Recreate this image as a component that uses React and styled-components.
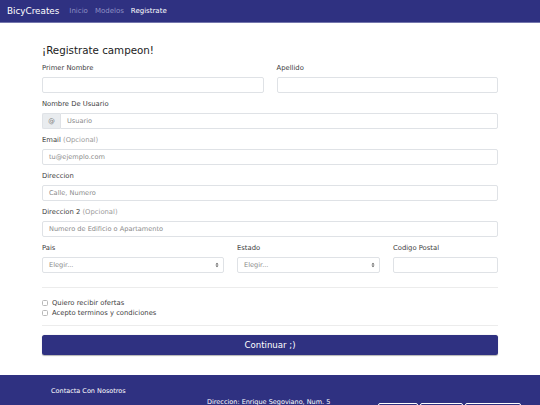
import React from "react";
import styled, { createGlobalStyle } from "styled-components";

const Global = createGlobalStyle`
  html, body { margin: 0; padding: 0; background: #fff; }
  body { font-family: "DejaVu Sans", "Open Sans", sans-serif; color: #3b3b3b; }
  * { box-sizing: border-box; }
`;

const BLUE = "#2f3181";

const Nav = styled.nav`
  height: 23px;
  background: ${BLUE};
  border-bottom: 1px solid #7476ad;
  display: flex;
  align-items: center;
  padding-left: 7px;
`;
const Brand = styled.span`
  color: #fff;
  font-size: 8.8px;
  margin-right: 10px;
`;
const NavLink = styled.span`
  color: ${(p) => (p.$active ? "#ffffff" : "#8e90c4")};
  font-size: 7px;
  margin-right: 7px;
`;

const Main = styled.main`
  padding: 21px 42px 0 42px;
`;
const Title = styled.h1`
  margin: 0 0 7px 0;
  font-size: 10.3px;
  line-height: 13px;
  font-weight: 400;
  color: #222;
`;
const Row = styled.div`
  display: grid;
  grid-template-columns: ${(p) => p.$cols || "1fr"};
  column-gap: 13px;
`;
const Group = styled.div`
  margin-bottom: 7px;
`;
const Label = styled.div`
  font-size: 6.8px;
  line-height: 9px;
  margin-bottom: 4px;
  color: #3d3d3d;
`;
const Muted = styled.span`
  color: #9a9a9a;
`;
const Input = styled.div`
  height: 16px;
  border: 1px solid #dfe2e6;
  border-radius: 2px;
  display: flex;
  align-items: center;
  padding-left: 6px;
  font-size: 6.6px;
  color: #8a8a8a;
  background: #fff;
`;
const InputGroup = styled.div`
  display: flex;
  height: 16px;
`;
const Prepend = styled.div`
  width: 18px;
  background: #e9ecef;
  border: 1px solid #dfe2e6;
  border-right: none;
  border-radius: 2px 0 0 2px;
  display: flex;
  align-items: center;
  justify-content: center;
  font-size: 6.6px;
  color: #777;
`;
const GroupInput = styled(Input)`
  flex: 1;
  border-radius: 0 2px 2px 0;
`;
const Select = styled(Input)`
  justify-content: space-between;
  padding-right: 4px;
`;
const Hr = styled.hr`
  border: none;
  border-top: 1px solid #ececec;
  margin: ${(p) => p.$m || "0"};
`;
const Check = styled.label`
  display: flex;
  align-items: center;
  height: 10px;
  font-size: 6.8px;
  color: #3d3d3d;
`;
const Box = styled.span`
  width: 6px;
  height: 6px;
  border: 1px solid #b9b9b9;
  border-radius: 1.5px;
  margin-right: 4px;
`;
const Button = styled.button`
  display: block;
  width: 100%;
  height: 20px;
  margin-top: 9px;
  border: none;
  border-radius: 2.5px;
  background: ${BLUE};
  color: #fff;
  font-family: inherit;
  font-size: 8.6px;
  box-shadow: 0 0.5px 1px rgba(0,0,0,0.3);
`;
const Footer = styled.footer`
  margin-top: 20px;
  background: ${BLUE};
  height: 40px;
  padding: 12px 0 0 51px;
  overflow: hidden;
  color: #fff;
`;
const FootTitle = styled.div`
  font-size: 6.5px;
  line-height: 9px;
`;
const FootRow = styled.div`
  display: flex;
  align-items: flex-start;
  margin-top: 2px;
`;
const FootText = styled.div`
  margin-left: 156px;
  font-size: 6.5px;
  line-height: 9px;
  white-space: nowrap;
`;
const FootBtns = styled.div`
  display: flex;
  gap: 2px;
  margin-left: auto;
  margin-right: 19px;
  margin-top: 5px;
`;
const FootBtn = styled.div`
  width: ${(p) => p.$w}px;
  height: 12px;
  border: 1px solid #fff;
  border-radius: 2px;
`;

const Caret = () => (
  <svg width="4" height="6" viewBox="0 0 4 6">
    <path d="M0.5 2.5 L2 0.8 L3.5 2.5 Z M0.5 3.5 L2 5.2 L3.5 3.5 Z" fill="#555" />
  </svg>
);

export default function App() {
  return (
    <>
      <Global />
      <Nav>
        <Brand>BicyCreates</Brand>
        <NavLink>Inicio</NavLink>
        <NavLink>Modelos</NavLink>
        <NavLink $active>Registrate</NavLink>
      </Nav>
      <Main>
        <Title>¡Registrate campeon!</Title>
        <Row $cols="1fr 1fr">
          <Group>
            <Label>Primer Nombre</Label>
            <Input />
          </Group>
          <Group>
            <Label>Apellido</Label>
            <Input />
          </Group>
        </Row>
        <Group>
          <Label>Nombre De Usuario</Label>
          <InputGroup>
            <Prepend>@</Prepend>
            <GroupInput>Usuario</GroupInput>
          </InputGroup>
        </Group>
        <Group>
          <Label>Email <Muted>(Opcional)</Muted></Label>
          <Input>tu@ejemplo.com</Input>
        </Group>
        <Group>
          <Label>Direccion</Label>
          <Input>Calle, Numero</Input>
        </Group>
        <Group>
          <Label>Direccion 2 <Muted>(Opcional)</Muted></Label>
          <Input>Numero de Edificio o Apartamento</Input>
        </Group>
        <Row $cols="182px 143px 1fr">
          <Group>
            <Label>Pais</Label>
            <Select>Elegir... <Caret /></Select>
          </Group>
          <Group>
            <Label>Estado</Label>
            <Select>Elegir... <Caret /></Select>
          </Group>
          <Group>
            <Label>Codigo Postal</Label>
            <Input />
          </Group>
        </Row>
        <Hr $m="7px 0 10px 0" />
        <Check><Box />Quiero recibir ofertas</Check>
        <Check><Box />Acepto terminos y condiciones</Check>
        <Hr $m="7px 0 0 0" />
        <Button>Continuar ;)</Button>
      </Main>
      <Footer>
        <FootTitle>Contacta Con Nosotros</FootTitle>
        <FootRow>
          <FootText>Direccion: Enrique Segoviano, Num. 5</FootText>
          <FootBtns>
            <FootBtn $w={40} />
            <FootBtn $w={43} />
            <FootBtn $w={56} />
          </FootBtns>
        </FootRow>
      </Footer>
    </>
  );
}
